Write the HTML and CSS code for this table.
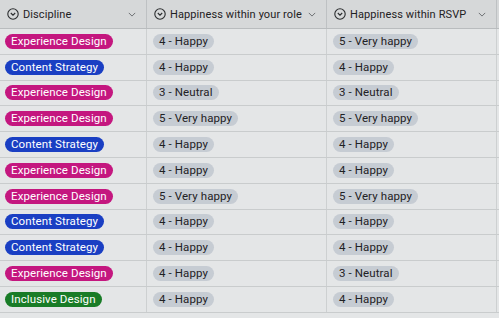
FILE: index.html
```html
<!DOCTYPE html>
<html>
<head>
<meta charset="utf-8">
<link rel="stylesheet" href="styles.css">
</head>
<body>
<div class="table">
  <div class="row head">
    <div class="cell c1"><svg class="ci" viewBox="0 0 12 12"><circle cx="6" cy="6" r="5.2"/><path d="M3.8 5 L6 7.2 L8.2 5"/></svg><span class="ht">Discipline</span><svg class="dd" viewBox="0 0 10 6"><path d="M1 1 L5 5 L9 1"/></svg></div>
    <div class="cell c2"><svg class="ci" viewBox="0 0 12 12"><circle cx="6" cy="6" r="5.2"/><path d="M3.8 5 L6 7.2 L8.2 5"/></svg><span class="ht">Happiness within your role</span><svg class="dd" viewBox="0 0 10 6"><path d="M1 1 L5 5 L9 1"/></svg></div>
    <div class="cell c3"><svg class="ci" viewBox="0 0 12 12"><circle cx="6" cy="6" r="5.2"/><path d="M3.8 5 L6 7.2 L8.2 5"/></svg><span class="ht">Happiness within RSVP</span><svg class="dd" viewBox="0 0 10 6"><path d="M1 1 L5 5 L9 1"/></svg></div>
    <div class="cell c4"></div>
  </div>
  <div class="row"><div class="cell c1"><span class="pill pink">Experience Design</span></div><div class="cell c2"><span class="pill gray">4 - Happy</span></div><div class="cell c3"><span class="pill gray">5 - Very happy</span></div><div class="cell c4"></div></div>
  <div class="row"><div class="cell c1"><span class="pill blue">Content Strategy</span></div><div class="cell c2"><span class="pill gray">4 - Happy</span></div><div class="cell c3"><span class="pill gray">4 - Happy</span></div><div class="cell c4"></div></div>
  <div class="row"><div class="cell c1"><span class="pill pink">Experience Design</span></div><div class="cell c2"><span class="pill gray">3 - Neutral</span></div><div class="cell c3"><span class="pill gray">3 - Neutral</span></div><div class="cell c4"></div></div>
  <div class="row"><div class="cell c1"><span class="pill pink">Experience Design</span></div><div class="cell c2"><span class="pill gray">5 - Very happy</span></div><div class="cell c3"><span class="pill gray">5 - Very happy</span></div><div class="cell c4"></div></div>
  <div class="row"><div class="cell c1"><span class="pill blue">Content Strategy</span></div><div class="cell c2"><span class="pill gray">4 - Happy</span></div><div class="cell c3"><span class="pill gray">4 - Happy</span></div><div class="cell c4"></div></div>
  <div class="row"><div class="cell c1"><span class="pill pink">Experience Design</span></div><div class="cell c2"><span class="pill gray">4 - Happy</span></div><div class="cell c3"><span class="pill gray">4 - Happy</span></div><div class="cell c4"></div></div>
  <div class="row"><div class="cell c1"><span class="pill pink">Experience Design</span></div><div class="cell c2"><span class="pill gray">5 - Very happy</span></div><div class="cell c3"><span class="pill gray">5 - Very happy</span></div><div class="cell c4"></div></div>
  <div class="row"><div class="cell c1"><span class="pill blue">Content Strategy</span></div><div class="cell c2"><span class="pill gray">4 - Happy</span></div><div class="cell c3"><span class="pill gray">4 - Happy</span></div><div class="cell c4"></div></div>
  <div class="row"><div class="cell c1"><span class="pill blue">Content Strategy</span></div><div class="cell c2"><span class="pill gray">4 - Happy</span></div><div class="cell c3"><span class="pill gray">4 - Happy</span></div><div class="cell c4"></div></div>
  <div class="row"><div class="cell c1"><span class="pill pink">Experience Design</span></div><div class="cell c2"><span class="pill gray">4 - Happy</span></div><div class="cell c3"><span class="pill gray">3 - Neutral</span></div><div class="cell c4"></div></div>
  <div class="row"><div class="cell c1"><span class="pill green">Inclusive Design</span></div><div class="cell c2"><span class="pill gray">4 - Happy</span></div><div class="cell c3"><span class="pill gray">4 - Happy</span></div><div class="cell c4"></div></div>
</div>
</body>
</html>
```
FILE: styles.css
```css
html, body {
  margin: 0;
  padding: 0;
  background: #e4e6e7;
}
body {
  width: 499px;
  height: 318px;
  overflow: hidden;
  font-family: Roboto, "Liberation Sans", sans-serif;
  color: #1d1f21;
}
* { box-sizing: border-box; }
.table {
  display: flex;
  flex-direction: column;
}
.row {
  display: grid;
  grid-template-columns: 147px 180px 170px 2px;
  height: 25.8px;
  border-bottom: 1px solid #c9cccd;
}
.row.head {
  height: 29px;
  background: #d6d8d9;
  border-bottom: 1px solid #b9bcbe;
}
.cell {
  display: flex;
  align-items: center;
  padding-left: 5px;
  border-right: 1px solid #cdd0d1;
  min-width: 0;
}
.head .cell {
  padding-left: 7px;
  padding-right: 10px;
  border-right-color: #bec1c3;
}
.c2, .c3 { padding-left: 6px; }
.c4 { border-right: none; padding: 0; }
.ci {
  width: 12px;
  height: 12px;
  fill: none;
  stroke: #2a2c2e;
  stroke-width: 1.1;
  flex: none;
}
.ht {
  margin-left: 4px;
  font-size: 11px;
  font-weight: 400;
  letter-spacing: 0.1px;
  color: #1f2123;
  white-space: nowrap;
  flex: 1;
}
.dd {
  width: 8px;
  height: 5px;
  fill: none;
  stroke: #6a6d70;
  stroke-width: 1.2;
  flex: none;
}
.pill {
  display: inline-block;
  height: 15px;
  line-height: 15px;
  padding: 0 6px;
  border-radius: 8px;
  font-size: 11.5px;
  font-weight: 400;
  letter-spacing: 0.1px;
  white-space: nowrap;
}
.pink { background: #c4177f; color: #fff; }
.blue { background: #1a3fc3; color: #fff; }
.green { background: #197c27; color: #fff; }
.gray { background: #c6ccd3; color: #1f2124; }
```
